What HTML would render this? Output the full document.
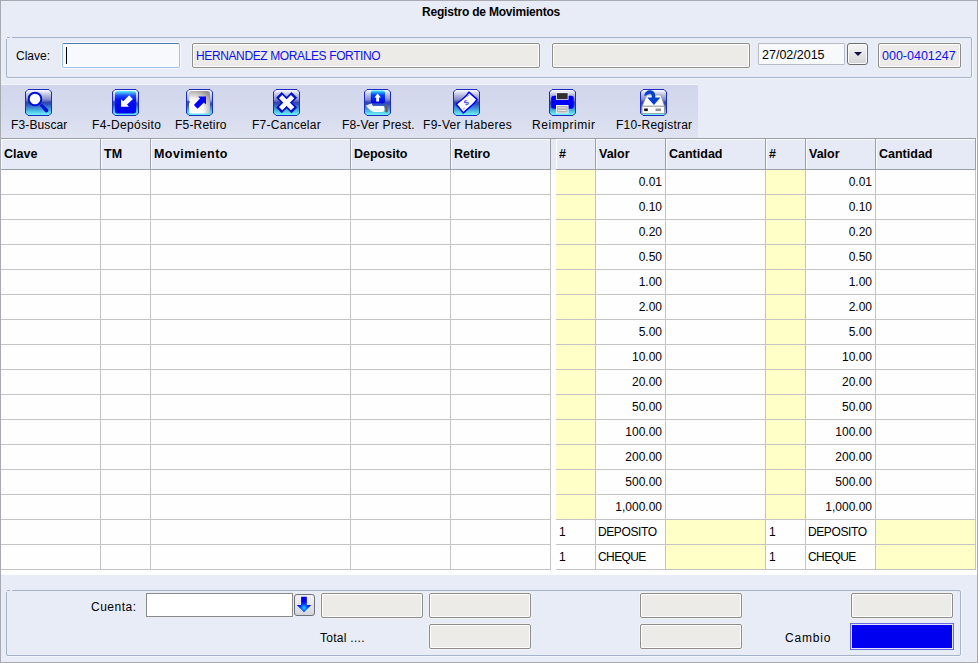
<!DOCTYPE html>
<html><head><meta charset="utf-8">
<style>
*{margin:0;padding:0;box-sizing:border-box}
html,body{width:978px;height:663px;overflow:hidden;background:#e8ecf6}
body{position:relative;font-family:"Liberation Sans",sans-serif;font-size:12px;color:#000}
.abs{position:absolute}
.win{position:absolute;left:0;top:0;width:978px;height:663px;border:1px solid #a7aab1;background:#e8ecf6}
.grp{position:absolute;border:1px solid #a4b3c8;border-radius:0 2px 2px 2px;box-shadow:1px 1px 0 #f3f6fd}
.gap{position:absolute;height:1px;background:#e8ecf6}
.fld{position:absolute;background:#ecebe8;border:1px solid #8c8c8c;border-radius:2px;box-shadow:inset 1px 1px 0 #fff,inset -1px -1px 0 #fff,0 0 0 1px #f1f1f0}
.t{position:absolute;white-space:nowrap;line-height:14px}
.b{font-weight:bold}
.blue{color:#1010f0}
.tb{position:absolute;left:1px;top:84px;width:697px;height:54px;background:linear-gradient(#d1d6ec,#d6dbee 55%,#dfe3f1);border-top:1px solid #f2f4fb}
.lbl{position:absolute;top:118px;white-space:nowrap;line-height:14px;font-size:12px}
.ic{position:absolute;top:89px;width:27px;height:27px}
.hd{position:absolute;background:#e6eaf6;border-top:1px solid #9b9ea6;border-bottom:1px solid #9b9ea6;box-shadow:inset 0 1px 0 #fbfcff}
.hw{position:absolute;width:1px;background:#fbfcff}
.vl{position:absolute;width:1px;background:#c4c4c4}
.hl{position:absolute;height:1px;background:#c4c4c4}
.vh{position:absolute;width:1px;background:#9b9ea6}
.y{position:absolute;background:#ffffc8}
</style></head><body>
<div class="win"></div>

<div class="t b" style="left:422px;top:5px;letter-spacing:-0.2px">Registro de Movimientos</div>
<div class="grp" style="left:6px;top:37px;width:966px;height:41px"></div>
<div class="gap" style="left:6px;top:37px;width:1px"></div><div class="gap" style="left:10px;top:37px;width:2px"></div><div class="gap" style="left:6px;top:38px;width:1px"></div>
<div class="t" style="left:16px;top:49px">Clave:</div>
<div class="abs" style="left:62px;top:43px;width:118px;height:25px;background:#f8f9fc;border:1px solid #9cc4e6;border-top-color:#4a7bb2;border-radius:2px;box-shadow:0 0 0 1px #f7f9fd"></div>
<div class="abs" style="left:66px;top:47px;width:1px;height:17px;background:#000"></div>
<div class="fld" style="left:192px;top:43px;width:348px;height:25px"></div>
<div class="t blue" style="left:196px;top:49px;letter-spacing:-0.38px">HERNANDEZ MORALES FORTINO</div>
<div class="fld" style="left:552px;top:43px;width:198px;height:25px"></div>
<div class="abs" style="left:758px;top:43px;width:87px;height:22px;background:#f8f9fc;border:1px solid #b8bcc4;border-radius:1px"></div>
<div class="t" style="left:762px;top:48px;font-size:12.5px">27/02/2015</div>
<div class="abs" style="left:847px;top:43px;width:21px;height:22px;background:linear-gradient(#f6f6f6,#e6e6e8 50%,#d2d3d6);border:1px solid #6e6e70;border-radius:3px;box-shadow:inset 0 0 0 1px #fafafa"></div>
<svg class="abs" style="left:853px;top:51px" width="10" height="6"><path d="M1 1h8l-4 4z" fill="#101040"/></svg>
<div class="fld" style="left:878px;top:43px;width:83px;height:25px"></div>
<div class="t blue" style="left:882px;top:49px;font-size:12.5px">000-0401247</div>
<div class="tb"></div>
<svg class="ic" style="left:25px" width="27" height="27" viewBox="0 0 27 27"><defs>
<linearGradient id="fra" x1="0" y1="0" x2="0" y2="1">
<stop offset="0" stop-color="#ffffff"/>
<stop offset="0.06" stop-color="#f0f0f8"/>
<stop offset="0.2" stop-color="#bcc2e4"/>
<stop offset="0.38" stop-color="#8890cc"/>
<stop offset="0.5" stop-color="#3444b0"/>
<stop offset="0.57" stop-color="#3052c2"/>
<stop offset="0.8" stop-color="#48b0e0"/>
<stop offset="0.95" stop-color="#68eaf4"/>
<stop offset="1" stop-color="#70f4f8"/>
</linearGradient></defs>
<path d="M3 0.5H24L26.5 3V24L24 26.5H3L0.5 24V3Z" fill="url(#fra)" stroke="#1a2cc0" stroke-width="1"/>
<path d="M16.6 14.8L23 20.2A2 2 0 0 1 20.2 23L14.8 16.6Z" fill="#0010d0"/>
<circle cx="10" cy="10" r="6.3" fill="#fff" stroke="#0010d8" stroke-width="2"/>
</svg>
<svg class="ic" style="left:112px" width="27" height="27" viewBox="0 0 27 27"><defs>
<linearGradient id="gdi" x1="0" y1="0" x2="0" y2="1">
<stop offset="0" stop-color="#60f0f8"/><stop offset="0.2" stop-color="#2050ff"/><stop offset="0.4" stop-color="#0010ff"/><stop offset="1" stop-color="#0000ee"/></linearGradient>
<linearGradient id="gdo" x1="0" y1="0" x2="0" y2="1">
<stop offset="0" stop-color="#ffffff"/><stop offset="0.4" stop-color="#a0a8e0"/><stop offset="0.55" stop-color="#3040b8"/><stop offset="0.85" stop-color="#50c8f0"/><stop offset="1" stop-color="#70f4f8"/></linearGradient>
</defs>
<path d="M3 0.5H24L26.5 3V24L24 26.5H3L0.5 24V3Z" fill="url(#gdo)" stroke="#1a2cc0" stroke-width="1"/>
<rect x="3" y="2" width="21" height="22.5" rx="2.5" fill="url(#gdi)"/>
<rect x="1" y="12.3" width="3" height="1.3" fill="#2a3cb0"/>
<path d="M9 17.7V10.3L11.3 12.2L17.2 6.3L20.8 10.3L15 15.6L16.9 17.7Z" fill="#fff"/>
</svg>
<svg class="ic" style="left:186px" width="27" height="27" viewBox="0 0 27 27"><defs>
<radialGradient id="gri" cx="0.2" cy="0.85" r="1">
<stop offset="0" stop-color="#ffffff"/><stop offset="0.45" stop-color="#ffffff"/><stop offset="1" stop-color="#9a9490"/></radialGradient>
<linearGradient id="gro" x1="0" y1="0" x2="0" y2="1">
<stop offset="0" stop-color="#ffffff"/><stop offset="0.4" stop-color="#a0a8e0"/><stop offset="0.55" stop-color="#3040b8"/><stop offset="0.85" stop-color="#50c8f0"/><stop offset="1" stop-color="#70f4f8"/></linearGradient>
</defs>
<path d="M3 0.5H24L26.5 3V24L24 26.5H3L0.5 24V3Z" fill="url(#gro)" stroke="#1a2cc0" stroke-width="1"/>
<rect x="3" y="2" width="21" height="22.5" rx="2.5" fill="url(#gri)"/>
<rect x="1" y="12.3" width="3" height="1.3" fill="#2a3cb0"/>
<path d="M20 7.6V15.6L17.9 13.5L11.6 19.8L7.9 15.9L14.1 9.6L12.1 7.6Z" fill="#0000f8"/>
</svg>
<svg class="ic" style="left:273px" width="27" height="27" viewBox="0 0 27 27"><defs>
<linearGradient id="frc" x1="0" y1="0" x2="0" y2="1">
<stop offset="0" stop-color="#ffffff"/>
<stop offset="0.06" stop-color="#f0f0f8"/>
<stop offset="0.2" stop-color="#bcc2e4"/>
<stop offset="0.38" stop-color="#8890cc"/>
<stop offset="0.5" stop-color="#3444b0"/>
<stop offset="0.57" stop-color="#3052c2"/>
<stop offset="0.8" stop-color="#48b0e0"/>
<stop offset="0.95" stop-color="#68eaf4"/>
<stop offset="1" stop-color="#70f4f8"/>
</linearGradient></defs>
<path d="M3 0.5H24L26.5 3V24L24 26.5H3L0.5 24V3Z" fill="url(#frc)" stroke="#1a2cc0" stroke-width="1"/>
<path d="M5.9 5.9L21.3 21.3M21.3 5.9L5.9 21.3" stroke="#0010c8" stroke-width="8" stroke-linecap="butt"/>
<path d="M7.6 7.6L19.6 19.6M19.6 7.6L7.6 19.6" stroke="#fff" stroke-width="4.7" stroke-linecap="butt"/>
</svg>
<svg class="ic" style="left:364px" width="27" height="27" viewBox="0 0 27 27"><defs>
<linearGradient id="frp" x1="0" y1="0" x2="0" y2="1">
<stop offset="0" stop-color="#ffffff"/>
<stop offset="0.06" stop-color="#f0f0f8"/>
<stop offset="0.2" stop-color="#bcc2e4"/>
<stop offset="0.38" stop-color="#8890cc"/>
<stop offset="0.5" stop-color="#3444b0"/>
<stop offset="0.57" stop-color="#3052c2"/>
<stop offset="0.8" stop-color="#48b0e0"/>
<stop offset="0.95" stop-color="#68eaf4"/>
<stop offset="1" stop-color="#70f4f8"/>
</linearGradient></defs>
<path d="M3 0.5H24L26.5 3V24L24 26.5H3L0.5 24V3Z" fill="url(#frp)" stroke="#1a2cc0" stroke-width="1"/>
<defs><linearGradient id="gpi" x1="0" y1="0" x2="0" y2="1"><stop offset="0" stop-color="#40e8ff"/><stop offset="0.35" stop-color="#0040ff"/><stop offset="1" stop-color="#0000f0"/></linearGradient></defs>
<rect x="6.8" y="1.6" width="14.2" height="12.6" rx="2" fill="url(#gpi)"/>
<path d="M13.6 4.6L16.9 8.6H15.1V12.6H12.2V8.6H10.4Z" fill="#fff"/>
<path d="M2 16.6L7.6 14.4L8.8 17H19C20.3 17 20.6 18.3 20.5 20.3C20.4 22.3 19.6 22.9 18 22.9H10.5C7.5 22.9 4.5 20 2 16.6Z" fill="#fff"/><path d="M3.5 16.5L7.3 15.3M4.5 17.8L8 16.8" stroke="#c8d0f0" stroke-width="0.6"/><path d="M9.3 20.8H15.5" stroke="#b0d8f0" stroke-width="0.6"/>
<rect x="21.3" y="15.6" width="2.4" height="7.6" fill="#7a5848"/>
</svg>
<svg class="ic" style="left:453px" width="27" height="27" viewBox="0 0 27 27"><defs>
<linearGradient id="frh" x1="0" y1="0" x2="0" y2="1">
<stop offset="0" stop-color="#ffffff"/>
<stop offset="0.06" stop-color="#f0f0f8"/>
<stop offset="0.2" stop-color="#bcc2e4"/>
<stop offset="0.38" stop-color="#8890cc"/>
<stop offset="0.5" stop-color="#3444b0"/>
<stop offset="0.57" stop-color="#3052c2"/>
<stop offset="0.8" stop-color="#48b0e0"/>
<stop offset="0.95" stop-color="#68eaf4"/>
<stop offset="1" stop-color="#70f4f8"/>
</linearGradient></defs>
<path d="M3 0.5H24L26.5 3V24L24 26.5H3L0.5 24V3Z" fill="url(#frh)" stroke="#1a2cc0" stroke-width="1"/>
<path d="M3.3 15.3C8 10.5 13 8.5 15.9 3.1L24 10.4C21 15.8 16 17.8 10.4 24Z" fill="#fff" stroke="#0000f4" stroke-width="1.5" stroke-linejoin="round"/>
<text x="13" y="16.2" font-family="Liberation Sans" font-size="7.5" font-weight="bold" fill="#3a3ae8" text-anchor="middle" transform="rotate(-35 13 13.4)">$</text>
<path d="M14 7.6L16.8 5.6M10 20.3L12.4 18.6" stroke="#5050e8" stroke-width="0.9" stroke-dasharray="0.9 0.8"/>
</svg>
<svg class="ic" style="left:549px" width="27" height="27" viewBox="0 0 27 27"><defs>
<linearGradient id="frr" x1="0" y1="0" x2="0" y2="1">
<stop offset="0" stop-color="#ffffff"/>
<stop offset="0.06" stop-color="#f0f0f8"/>
<stop offset="0.2" stop-color="#bcc2e4"/>
<stop offset="0.38" stop-color="#8890cc"/>
<stop offset="0.5" stop-color="#3444b0"/>
<stop offset="0.57" stop-color="#3052c2"/>
<stop offset="0.8" stop-color="#48b0e0"/>
<stop offset="0.95" stop-color="#68eaf4"/>
<stop offset="1" stop-color="#70f4f8"/>
</linearGradient></defs>
<path d="M3 0.5H24L26.5 3V24L24 26.5H3L0.5 24V3Z" fill="url(#frr)" stroke="#1a2cc0" stroke-width="1"/>
<rect x="2.2" y="6.8" width="22.5" height="13" rx="2.5" fill="#0000f8"/>
<rect x="7" y="3.4" width="12.5" height="7.4" fill="#fff"/>
<rect x="7.8" y="4.1" width="10.9" height="6" fill="#303030"/>
<rect x="7" y="16" width="12.5" height="8.4" fill="#fff"/>
<rect x="7.8" y="16.8" width="10.9" height="6.8" fill="#b4b4b4"/>
<rect x="9" y="18.4" width="8.5" height="1" fill="#e8e8e8"/>
<rect x="9" y="21" width="8.5" height="1" fill="#e8e8e8"/>
</svg>
<svg class="ic" style="left:640px" width="27" height="27" viewBox="0 0 27 27"><defs>
<linearGradient id="frg" x1="0" y1="0" x2="0" y2="1">
<stop offset="0" stop-color="#ffffff"/>
<stop offset="0.06" stop-color="#f0f0f8"/>
<stop offset="0.2" stop-color="#bcc2e4"/>
<stop offset="0.38" stop-color="#8890cc"/>
<stop offset="0.5" stop-color="#3444b0"/>
<stop offset="0.57" stop-color="#3052c2"/>
<stop offset="0.8" stop-color="#48b0e0"/>
<stop offset="0.95" stop-color="#68eaf4"/>
<stop offset="1" stop-color="#70f4f8"/>
</linearGradient></defs>
<path d="M3 0.5H24L26.5 3V24L24 26.5H3L0.5 24V3Z" fill="url(#frg)" stroke="#1a2cc0" stroke-width="1"/>
<path d="M6.9 6H20.8L24.5 17.2V24.5H2.1V17.2Z" fill="#fff" stroke="#808080" stroke-width="0.6"/>
<path d="M2.3 17.2H24.3" stroke="#707070" stroke-width="0.8"/>
<rect x="4.2" y="19.5" width="3.6" height="2.6" fill="#101010"/>
<rect x="15.5" y="19.5" width="5.5" height="2.6" fill="#909090"/>
<path d="M4.4 7.2C4.3 3 7.5 1.2 10.3 1.2C13.8 1.3 15.6 4 15.3 8.5H20.3L14 16L7.2 8.5H11.7C11.9 6 11.5 4.8 10.2 4.8C8.8 4.8 7.2 5.8 4.4 7.2Z" fill="#0040d0"/>
</svg>
<div class="lbl" style="left:11px;letter-spacing:0.125px">F3-Buscar</div>
<div class="lbl" style="left:92px;letter-spacing:0.350px">F4-Depósito</div>
<div class="lbl" style="left:175px;letter-spacing:0.188px">F5-Retiro</div>
<div class="lbl" style="left:252px;letter-spacing:0.270px">F7-Cancelar</div>
<div class="lbl" style="left:342px;letter-spacing:0.167px">F8-Ver Prest.</div>
<div class="lbl" style="left:423px;letter-spacing:0.308px">F9-Ver Haberes</div>
<div class="lbl" style="left:532px;letter-spacing:0.556px">Reimprimir</div>
<div class="lbl" style="left:616px;letter-spacing:0.225px">F10-Registrar</div>
<div class="abs" style="left:1px;top:138px;width:550px;height:437px;background:#fefefe"></div>
<div class="hd" style="left:1px;top:138px;width:550px;height:32px"></div>
<div class="abs" style="left:551px;top:138px;width:5px;height:32px;background:#e6eaf6;border-top:1px solid #9b9ea6"></div>
<div class="abs" style="left:551px;top:170px;width:5px;height:405px;background:#fefefe"></div>
<div class="abs" style="left:556px;top:138px;width:421px;height:437px;background:#fefefe"></div>
<div class="hd" style="left:556px;top:138px;width:420px;height:32px"></div>
<div class="t b" style="left:4px;top:147px;font-size:12.5px;letter-spacing:0px">Clave</div>
<div class="t b" style="left:104px;top:147px;font-size:12.5px;letter-spacing:0px">TM</div>
<div class="t b" style="left:154px;top:147px;font-size:12.5px;letter-spacing:0.44px">Movimiento</div>
<div class="t b" style="left:354px;top:147px;font-size:12.5px;letter-spacing:0px">Deposito</div>
<div class="t b" style="left:454px;top:147px;font-size:12.5px;letter-spacing:0px">Retiro</div>
<div class="t b" style="left:559px;top:147px;font-size:12.5px">#</div>
<div class="t b" style="left:599px;top:147px;font-size:12.5px">Valor</div>
<div class="t b" style="left:669px;top:147px;font-size:12.5px">Cantidad</div>
<div class="t b" style="left:769px;top:147px;font-size:12.5px">#</div>
<div class="t b" style="left:809px;top:147px;font-size:12.5px">Valor</div>
<div class="t b" style="left:879px;top:147px;font-size:12.5px">Cantidad</div>
<div class="y" style="left:556px;top:170px;width:39px;height:349px"></div>
<div class="y" style="left:766px;top:170px;width:39px;height:349px"></div>
<div class="y" style="left:666px;top:520px;width:99px;height:49px"></div>
<div class="y" style="left:876px;top:520px;width:99px;height:49px"></div>
<div class="hw" style="left:1px;top:139px;height:30px"></div>
<div class="hw" style="left:101px;top:139px;height:30px"></div>
<div class="hw" style="left:151px;top:139px;height:30px"></div>
<div class="hw" style="left:351px;top:139px;height:30px"></div>
<div class="hw" style="left:451px;top:139px;height:30px"></div>
<div class="hw" style="left:556px;top:139px;height:30px"></div>
<div class="hw" style="left:596px;top:139px;height:30px"></div>
<div class="hw" style="left:666px;top:139px;height:30px"></div>
<div class="hw" style="left:766px;top:139px;height:30px"></div>
<div class="hw" style="left:806px;top:139px;height:30px"></div>
<div class="hw" style="left:876px;top:139px;height:30px"></div>
<div class="vh" style="left:100px;top:139px;height:30px"></div>
<div class="vl" style="left:100px;top:170px;height:400px"></div>
<div class="vh" style="left:150px;top:139px;height:30px"></div>
<div class="vl" style="left:150px;top:170px;height:400px"></div>
<div class="vh" style="left:350px;top:139px;height:30px"></div>
<div class="vl" style="left:350px;top:170px;height:400px"></div>
<div class="vh" style="left:450px;top:139px;height:30px"></div>
<div class="vl" style="left:450px;top:170px;height:400px"></div>
<div class="vh" style="left:550px;top:139px;height:30px"></div>
<div class="vl" style="left:550px;top:170px;height:400px"></div>
<div class="vh" style="left:595px;top:139px;height:30px"></div>
<div class="vl" style="left:595px;top:170px;height:400px"></div>
<div class="vh" style="left:665px;top:139px;height:30px"></div>
<div class="vl" style="left:665px;top:170px;height:400px"></div>
<div class="vh" style="left:765px;top:139px;height:30px"></div>
<div class="vl" style="left:765px;top:170px;height:400px"></div>
<div class="vh" style="left:805px;top:139px;height:30px"></div>
<div class="vl" style="left:805px;top:170px;height:400px"></div>
<div class="vh" style="left:875px;top:139px;height:30px"></div>
<div class="vl" style="left:875px;top:170px;height:400px"></div>
<div class="vh" style="left:975px;top:139px;height:30px"></div>
<div class="vl" style="left:975px;top:170px;height:400px"></div>
<div class="hl" style="left:1px;top:194px;width:550px"></div>
<div class="hl" style="left:556px;top:194px;width:420px"></div>
<div class="hl" style="left:1px;top:219px;width:550px"></div>
<div class="hl" style="left:556px;top:219px;width:420px"></div>
<div class="hl" style="left:1px;top:244px;width:550px"></div>
<div class="hl" style="left:556px;top:244px;width:420px"></div>
<div class="hl" style="left:1px;top:269px;width:550px"></div>
<div class="hl" style="left:556px;top:269px;width:420px"></div>
<div class="hl" style="left:1px;top:294px;width:550px"></div>
<div class="hl" style="left:556px;top:294px;width:420px"></div>
<div class="hl" style="left:1px;top:319px;width:550px"></div>
<div class="hl" style="left:556px;top:319px;width:420px"></div>
<div class="hl" style="left:1px;top:344px;width:550px"></div>
<div class="hl" style="left:556px;top:344px;width:420px"></div>
<div class="hl" style="left:1px;top:369px;width:550px"></div>
<div class="hl" style="left:556px;top:369px;width:420px"></div>
<div class="hl" style="left:1px;top:394px;width:550px"></div>
<div class="hl" style="left:556px;top:394px;width:420px"></div>
<div class="hl" style="left:1px;top:419px;width:550px"></div>
<div class="hl" style="left:556px;top:419px;width:420px"></div>
<div class="hl" style="left:1px;top:444px;width:550px"></div>
<div class="hl" style="left:556px;top:444px;width:420px"></div>
<div class="hl" style="left:1px;top:469px;width:550px"></div>
<div class="hl" style="left:556px;top:469px;width:420px"></div>
<div class="hl" style="left:1px;top:494px;width:550px"></div>
<div class="hl" style="left:556px;top:494px;width:420px"></div>
<div class="hl" style="left:1px;top:519px;width:550px"></div>
<div class="hl" style="left:556px;top:519px;width:420px"></div>
<div class="hl" style="left:1px;top:544px;width:550px"></div>
<div class="hl" style="left:556px;top:544px;width:420px"></div>
<div class="hl" style="left:1px;top:569px;width:550px"></div>
<div class="hl" style="left:556px;top:569px;width:420px"></div>
<div class="t" style="left:596px;top:175px;width:66px;text-align:right">0.01</div>
<div class="t" style="left:806px;top:175px;width:66px;text-align:right">0.01</div>
<div class="t" style="left:596px;top:200px;width:66px;text-align:right">0.10</div>
<div class="t" style="left:806px;top:200px;width:66px;text-align:right">0.10</div>
<div class="t" style="left:596px;top:225px;width:66px;text-align:right">0.20</div>
<div class="t" style="left:806px;top:225px;width:66px;text-align:right">0.20</div>
<div class="t" style="left:596px;top:250px;width:66px;text-align:right">0.50</div>
<div class="t" style="left:806px;top:250px;width:66px;text-align:right">0.50</div>
<div class="t" style="left:596px;top:275px;width:66px;text-align:right">1.00</div>
<div class="t" style="left:806px;top:275px;width:66px;text-align:right">1.00</div>
<div class="t" style="left:596px;top:300px;width:66px;text-align:right">2.00</div>
<div class="t" style="left:806px;top:300px;width:66px;text-align:right">2.00</div>
<div class="t" style="left:596px;top:325px;width:66px;text-align:right">5.00</div>
<div class="t" style="left:806px;top:325px;width:66px;text-align:right">5.00</div>
<div class="t" style="left:596px;top:350px;width:66px;text-align:right">10.00</div>
<div class="t" style="left:806px;top:350px;width:66px;text-align:right">10.00</div>
<div class="t" style="left:596px;top:375px;width:66px;text-align:right">20.00</div>
<div class="t" style="left:806px;top:375px;width:66px;text-align:right">20.00</div>
<div class="t" style="left:596px;top:400px;width:66px;text-align:right">50.00</div>
<div class="t" style="left:806px;top:400px;width:66px;text-align:right">50.00</div>
<div class="t" style="left:596px;top:425px;width:66px;text-align:right">100.00</div>
<div class="t" style="left:806px;top:425px;width:66px;text-align:right">100.00</div>
<div class="t" style="left:596px;top:450px;width:66px;text-align:right">200.00</div>
<div class="t" style="left:806px;top:450px;width:66px;text-align:right">200.00</div>
<div class="t" style="left:596px;top:475px;width:66px;text-align:right">500.00</div>
<div class="t" style="left:806px;top:475px;width:66px;text-align:right">500.00</div>
<div class="t" style="left:596px;top:500px;width:66px;text-align:right">1,000.00</div>
<div class="t" style="left:806px;top:500px;width:66px;text-align:right">1,000.00</div>
<div class="t" style="left:559px;top:525px">1</div>
<div class="t" style="left:598px;top:525px;letter-spacing:-0.4px">DEPOSITO</div>
<div class="t" style="left:769px;top:525px">1</div>
<div class="t" style="left:808px;top:525px;letter-spacing:-0.4px">DEPOSITO</div>
<div class="t" style="left:559px;top:550px">1</div>
<div class="t" style="left:598px;top:550px;letter-spacing:-0.6px">CHEQUE</div>
<div class="t" style="left:769px;top:550px">1</div>
<div class="t" style="left:808px;top:550px;letter-spacing:-0.6px">CHEQUE</div>
<div class="grp" style="left:6px;top:590px;width:955px;height:66px"></div>
<div class="gap" style="left:6px;top:590px;width:1px"></div><div class="gap" style="left:10px;top:590px;width:2px"></div><div class="gap" style="left:6px;top:591px;width:1px"></div>
<div class="t" style="left:91px;top:600px;letter-spacing:0.5px">Cuenta:</div>
<div class="abs" style="left:146px;top:593px;width:147px;height:24px;background:#fff;border:1px solid #8a8a8a"></div>
<div class="abs" style="left:294px;top:594px;width:21px;height:22px;background:linear-gradient(#f4f4f6,#d4d6dc);border:1px solid #6c6f78;border-radius:3px"></div>
<svg class="abs" style="left:297px;top:596px" width="15" height="18"><defs><radialGradient id="ag" cx="0.5" cy="0.72" r="0.45"><stop offset="0" stop-color="#10d8ff"/><stop offset="0.6" stop-color="#0030ff"/><stop offset="1" stop-color="#0000f0"/></radialGradient></defs><path d="M4.1 0.8h5.7v8.2h4.4L7 16.2L-0.2 9h4.3z" fill="url(#ag)"/></svg>
<div class="fld" style="left:321px;top:593px;width:102px;height:25px"></div>
<div class="fld" style="left:429px;top:593px;width:102px;height:25px"></div>
<div class="fld" style="left:429px;top:624px;width:102px;height:25px"></div>
<div class="fld" style="left:640px;top:593px;width:102px;height:25px"></div>
<div class="fld" style="left:640px;top:624px;width:102px;height:25px"></div>
<div class="fld" style="left:851px;top:593px;width:102px;height:25px"></div>
<div class="t" style="left:320px;top:631px;letter-spacing:0.28px">Total ....</div>
<div class="t" style="left:785px;top:631px;letter-spacing:0.8px">Cambio</div>
<div class="abs" style="left:850px;top:623px;width:104px;height:27px;background:#0000f0;border:1px solid #6a6ae8;box-shadow:inset 0 0 0 1px #e4e4ff"></div>
</body></html>
